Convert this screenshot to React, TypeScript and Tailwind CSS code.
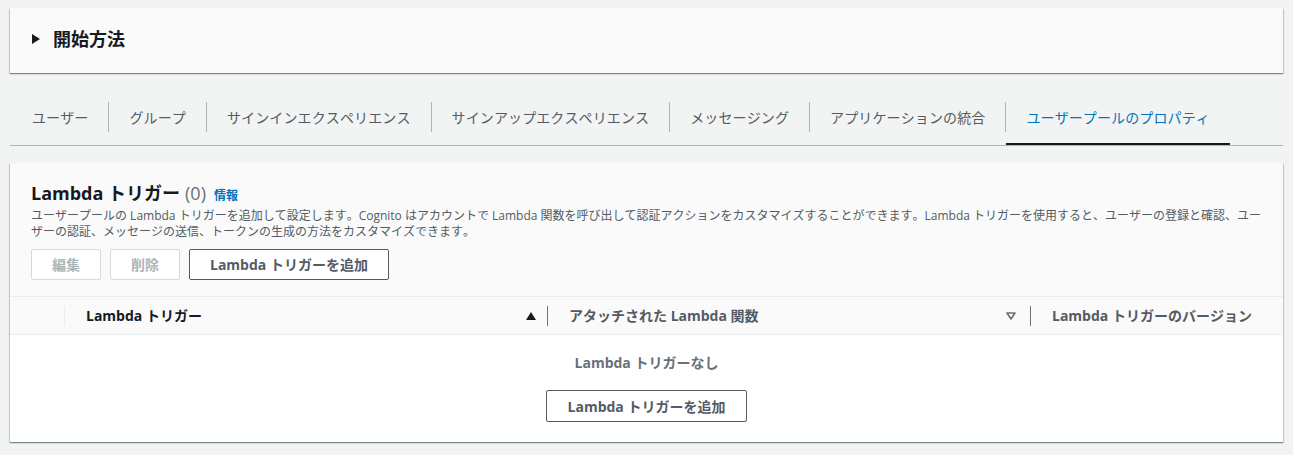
const font = { fontFamily: '"Open Sans", "Noto Sans CJK JP", sans-serif' };

const tabs = [
  "ユーザー",
  "グループ",
  "サインインエクスペリエンス",
  "サインアップエクスペリエンス",
  "メッセージング",
  "アプリケーションの統合",
  "ユーザープールのプロパティ",
];

const cardShadow =
  "shadow-[0_1px_1px_0_rgba(0,28,36,0.3),1px_1px_1px_0_rgba(0,28,36,0.15),-1px_1px_1px_0_rgba(0,28,36,0.15)]";

export default function App() {
  return (
    <div
      className="min-h-[455px] bg-[#f2f3f3] px-[10px] pt-[8px] text-[#16191f] [font-kerning:none]"
      style={font}
    >
      {/* Getting started */}
      <div className={`flex h-[65px] items-center bg-[#fafafa] pb-[3px] pl-[22px] ${cardShadow}`}>
        <svg width="8" height="10" viewBox="0 0 8 10" className="mr-[13px]">
          <path d="M0 0 L8 5 L0 10 Z" fill="#16191f" />
        </svg>
        <h2 className="text-[18px] font-bold leading-[22px]">開始方法</h2>
      </div>

      {/* Tabs */}
      <div className="mt-[22px] flex items-start border-b border-[#aab7b8] pl-[2px]">
        {tabs.map((t, i) => {
          const active = i === tabs.length - 1;
          return (
            <div key={t} className="flex items-start">
              {i > 0 && <div className="mt-[7px] h-[30px] w-px bg-[#aab7b8]" />}
              <div
                className={`flex h-[50px] items-center px-[20px] text-[14px] tracking-[0.12px] ${
                  active
                    ? "border-b-2 border-[#16191f] pb-[4px] text-[#0073bb]"
                    : "pb-[6px] text-[#545b64]"
                }`}
              >
                {t}
              </div>
            </div>
          );
        })}
      </div>

      {/* Lambda triggers */}
      <div className={`mt-[17px] bg-white ${cardShadow}`}>
        <div className="bg-[#fafafa] px-[21px] pb-[16px] pt-[19px]">
          <div className="flex items-baseline">
            <h2 className="text-[18px] font-bold leading-[22px]">Lambda トリガー</h2>
            <span className="ml-[5px] text-[18px] leading-[22px] text-[#687078]">(0)</span>
            <a className="ml-[8px] text-[12px] font-bold text-[#0073bb]">情報</a>
          </div>
          <p className="mt-[3px] text-[12px] leading-[16px] text-[#545b64]">
            ユーザープールの Lambda トリガーを追加して設定します。Cognito はアカウントで Lambda
            関数を呼び出して認証アクションをカスタマイズすることができます。Lambda
            トリガーを使用すると、ユーザーの登録と確認、ユーザーの認証、メッセージの送信、トークンの生成の方法をカスタマイズできます。
          </p>
          <div className="mt-[9px] flex gap-[9px]">
            <button className="h-[31px] rounded-[2px] border border-[#d5dbdb] bg-white px-[20px] text-[14px] font-bold text-[#aab7b8]">
              編集
            </button>
            <button className="h-[31px] rounded-[2px] border border-[#d5dbdb] bg-white px-[20px] text-[14px] font-bold text-[#aab7b8]">
              削除
            </button>
            <button className="h-[31px] rounded-[2px] border border-[#545b64] bg-white px-[20px] text-[14px] font-bold text-[#545b64]">
              Lambda トリガーを追加
            </button>
          </div>
        </div>

        {/* Table header */}
        <div className="flex h-[39px] items-center border-y border-[#eaeded] bg-[#fafafa] text-[14px] font-bold">
          <div className="w-[54px]" />
          <div className="h-[20px] w-px bg-[#eaeded]" />
          <div className="flex w-[482px] items-center justify-between pl-[21px] pr-[11px] text-[#16191f]">
            <span>Lambda トリガー</span>
            <svg width="10" height="8" viewBox="0 0 10 8">
              <path d="M5 0 L10 8 L0 8 Z" fill="#16191f" />
            </svg>
          </div>
          <div className="h-[20px] w-px bg-[#687078]" />
          <div className="flex w-[482px] items-center justify-between pl-[21px] pr-[14px] text-[#545b64]">
            <span>アタッチされた Lambda 関数</span>
            <svg width="10" height="8" viewBox="0 0 10 8">
              <path d="M1 1 L9 1 L5 7 Z" fill="none" stroke="#687078" strokeWidth="1.6" strokeLinejoin="round" />
            </svg>
          </div>
          <div className="h-[20px] w-px bg-[#687078]" />
          <div className="pl-[21px] text-[#545b64]">Lambda トリガーのバージョン</div>
        </div>

        {/* Empty state */}
        <div className="flex flex-col items-center pb-[20px] pt-[17px]">
          <div className="text-[14px] font-bold leading-[22px] text-[#687078]">Lambda トリガーなし</div>
          <button className="mt-[16px] h-[32px] w-[201px] rounded-[2px] border border-[#545b64] bg-white text-[14px] font-bold text-[#545b64]">
            Lambda トリガーを追加
          </button>
        </div>
      </div>
    </div>
  );
}
